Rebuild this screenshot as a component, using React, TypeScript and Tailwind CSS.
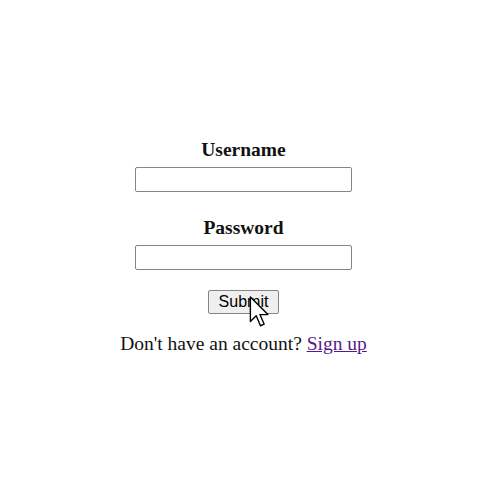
import React from 'react';

const Cursor = () => (
    <svg width="24" height="34" viewBox="0 0 22 32" className="absolute left-[249px] top-[296px]">
        <path
            d="M1 1 L1 24 L6.5 18.5 L10.5 28 L14 26.5 L10 17.5 L17.5 17.5 Z"
            fill="#fff"
            stroke="#000"
            strokeWidth="1.3"
            strokeLinejoin="round"
        />
    </svg>
);

export default function App() {
    return (
        <div className="relative w-[500px] h-[500px] bg-white flex flex-col items-center pt-[139px] pr-[13px] font-['Liberation_Serif',serif] text-[#111]">
            <label className="block text-[19.5px] leading-[22px] font-bold">Username</label>
            <input
                type="text"
                className="mt-[6px] w-[217px] h-[25px] border border-[#858585] rounded-[2px] bg-white outline-none"
            />
            <label className="block mt-[25px] text-[19.5px] leading-[22px] font-bold">Password</label>
            <input
                type="password"
                className="mt-[6px] w-[217px] h-[25px] border border-[#858585] rounded-[2px] bg-white outline-none"
            />
            <button
                type="button"
                className="mt-[20px] w-[71px] h-[24px] bg-[#efefef] border border-[#858585] rounded-[2px] font-['Liberation_Sans',sans-serif] text-[16px] leading-none text-black"
            >
                Submit
            </button>
            <p className="mt-[19px] text-[19.5px] leading-[22px]">
                Don't have an account?{' '}
                <a href="#" className="text-[#551a8b] underline">
                    Sign up
                </a>
            </p>
            <Cursor />
        </div>
    );
}
